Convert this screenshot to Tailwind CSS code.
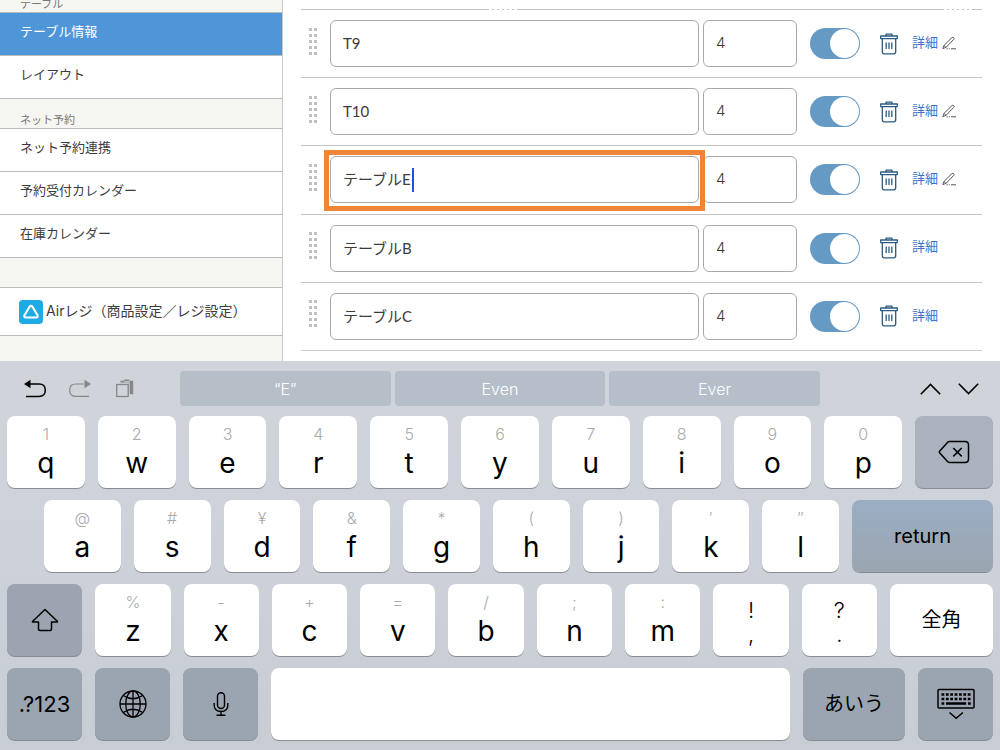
<!DOCTYPE html>
<html lang="ja">
<head>
<meta charset="utf-8">
<meta name="viewport" content="width=device-width, initial-scale=1">
<title>テーブル情報</title>
<script src="https://cdn.jsdelivr.net/npm/@tailwindcss/browser@4"></script>
</head>
<body class="flex min-h-screen flex-col bg-white font-['Inter','Noto_Sans_CJK_JP',sans-serif] text-[#3c3c3c]">

<svg class="hidden" aria-hidden="true">
  <symbol id="grip" viewBox="0 0 9 28">
    <g fill="#bfbfbf">
      <path d="M0 0h3v3H0zM5 0h3v3H5zM0 6h3v3H0zM5 6h3v3H5zM0 12h3v3H0zM5 12h3v3H5zM0 18h3v3H0zM5 18h3v3H5zM0 24h3v3H0zM5 24h3v3H5z"/>
    </g>
  </symbol>
  <symbol id="trash" viewBox="0 0 18 22">
    <g fill="none" stroke="#2b5a83" stroke-width="1.3" stroke-linejoin="round">
      <path d="M6 3V1.2h6V3"/><rect x=".7" y="3" width="16.6" height="2.6"/>
      <path d="M2.3 5.6v13.2q0 2 2 2h9.4q2 0 2-2V5.6"/><path d="M6.2 9.5v6.5M9 9.5v6.5M11.8 9.5v6.5"/>
    </g>
  </symbol>
  <symbol id="pencil" viewBox="0 0 14 14">
    <g fill="none" stroke="#555" stroke-width="1" stroke-linejoin="round">
      <path d="M.8 12.6 2 9.4 9.8 1.700q1-.9 1.900-.1t0 1.800L4 11.4zM2 9.4l2 2"/><path d="M4.500 12.800h1.200M6.800 12.800h1M9 12.800h5"/>
    </g>
  </symbol>
</svg>

<div class="flex">
  <nav class="flex w-[283px] shrink-0 flex-col border-r border-[#c8c8c8] bg-[#f5f5f1] text-[13px]">
    <h2 class="flex h-[13px] items-end border-b border-[#bbb] pl-5 text-[11px] leading-4 text-[#777]">テーブル</h2>
    <a href="#" aria-current="page" class="flex h-[43px] items-center border-b border-[#bbb] bg-[#4f96d8] pb-1 pl-5 text-white">テーブル情報</a>
    <a href="#" class="flex h-[43px] items-center border-b border-[#bbb] bg-white pb-1 pl-5">レイアウト</a>
    <h2 class="flex h-[30px] items-end border-b border-[#bbb] pl-5 text-[11px] leading-4 text-[#777]">ネット予約</h2>
    <a href="#" class="flex h-[43px] items-center border-b border-[#bbb] bg-white pb-1 pl-5">ネット予約連携</a>
    <a href="#" class="flex h-[43px] items-center border-b border-[#bbb] bg-white pb-1 pl-5">予約受付カレンダー</a>
    <a href="#" class="flex h-[43px] items-center border-b border-[#bbb] bg-white pb-1 pl-5">在庫カレンダー</a>
    <a href="#" class="mt-[29px] flex h-[49px] items-center gap-[3px] border-y border-[#bbb] bg-white pl-[19px] text-sm">
      <svg class="size-6" viewBox="0 0 24 24" aria-hidden="true"><rect width="24" height="24" rx="4" fill="#1eabe4"/><path d="M10.6 6.7q1.4-2 2.8 0l5 8.3q1.2 2.5-1.5 2.5H7.1q-2.700 0-1.500-2.500z" fill="none" stroke="#fff" stroke-width="2.100" stroke-linejoin="round"/></svg>
      <span class="pb-0.5">Airレジ（商品設定／レジ設定）</span>
    </a>
  </nav>

  <main class="relative min-w-0 flex-1 px-[18px] pt-[9px] pb-2.5">
    <div class="absolute top-[9px] left-[206px] w-7 border-b border-dashed border-white"></div>
    <div class="absolute top-[9px] right-7 w-7 border-b border-dashed border-white"></div>
    <ul id="rows" class="grid h-[342px] grid-rows-5 border-b border-[#ccc]"></ul>
  </main>
</div>

<section aria-label="キーボード" class="flex flex-1 flex-col gap-3 bg-linear-to-b from-[#d0d3da] via-[#cdd2da] to-[#c8cdd4] px-[7px] pt-2.5 pb-2 text-black">
  <div class="-mb-0.5 flex h-[35px] items-center">
    <div class="flex w-[173px] shrink-0 items-center gap-[19px] pl-[15px]">
      <button aria-label="元に戻す"><svg class="h-6 w-[26px]" viewBox="0 0 26 24"><path d="M7 7h10q6.300 0 6.300 6.200T17 19.400H4" fill="none" stroke="#000" stroke-width="1.500"/><path d="M2 7 8.500 2.800v8.400z"/></svg></button>
      <button aria-label="やり直す"><svg class="h-6 w-[26px]" viewBox="0 0 26 24"><path d="M17 7h-8q-6.300 0-6.300 6.200T9 19.400h13" fill="none" stroke="#858789" stroke-width="1.200"/><path d="M24 7l-6.500-4.200v8.400z" fill="#858789"/></svg></button>
      <button aria-label="ペースト"><svg class="h-6 w-[26px]" viewBox="0 0 26 24"><path d="M8.500 5.500V3.800h3.200q.2-1.300 2-1.300h2q1.800 0 2 1.300h3.500v13.400h-3.500V5.500z" fill="#858789"/><path d="M12 4.600h6" stroke="#d0d3da" stroke-width=".8"/><rect x="4.700" y="7.500" width="11.500" height="12" fill="#d0d3da" stroke="#858789" stroke-width="1.300"/></svg></button>
    </div>
    <div class="grid h-full flex-1 grid-cols-3 gap-1 text-base font-light text-white">
      <button class="rounded bg-[#b6bec8]">“E”</button>
      <button class="rounded bg-[#b6bec9]">Even</button>
      <button class="rounded bg-[#b5bec9]">Ever</button>
    </div>
    <div class="flex w-[173px] shrink-0 items-center justify-end gap-[17px] pr-3.5">
      <button aria-label="前へ"><svg class="h-3 w-[21px]" viewBox="0 0 21 12"><path d="M.8 11.200 10.500 1.500l9.700 9.700" fill="none" stroke="#000" stroke-width="1.600"/></svg></button>
      <button aria-label="次へ"><svg class="h-3 w-[21px]" viewBox="0 0 21 12"><path d="M.8.800l9.700 9.700L20.200.800" fill="none" stroke="#000" stroke-width="1.600"/></svg></button>
    </div>
  </div>

  <div class="flex gap-[13px]" data-keys="1q 2w 3e 4r 5t 6y 7u 8i 9o 0p">
    <button aria-label="削除" class="flex h-[72px] flex-1 items-center justify-center rounded-lg bg-[#a9b2bd] shadow-[0_1px_0_#898d92]"><svg class="h-6 w-8" viewBox="0 0 32 24"><path d="M11.500 1.500h15.500q3.500 0 3.500 3.500v14q0 3.500-3.500 3.500H11.500q-1.200 0-2-.9L1.800 13q-.9-1 0-2L9.500 2.400q.8-.9 2-.9zM15.300 8l8.400 8.400M23.700 8l-8.400 8.400" fill="none" stroke="#000" stroke-width="1.500"/></svg></button>
  </div>
  <div class="flex gap-[13px] pl-[37px]" data-keys="@a #s ¥d &amp;f *g (h )j ′k ″l">
    <button class="h-[72px] w-[141px] rounded-lg bg-linear-to-b from-[#9aadc3] to-[#9ba5b1] text-xl shadow-[0_1px_0_#858a91]">return</button>
  </div>
  <div class="flex gap-[13px]" data-keys="%z -x +c =v /b ;n :m">
    <button aria-label="シフト" data-first class="flex h-[72px] flex-1 items-center justify-center rounded-lg bg-[#9ca4b1] shadow-[0_1px_0_#858a91]"><svg class="h-6 w-7" viewBox="0 0 28 24"><path d="M14 1.500 26.300 13.200q.7.900-.4.900H20.500v7q0 1.500-1.500 1.500H9q-1.500 0-1.500-1.500v-7H2.100q-1.100 0-.4-.9z" fill="none" stroke="#000" stroke-width="1.500" stroke-linejoin="round"/></svg></button>
    <button class="flex h-[72px] flex-1 flex-col items-center justify-center rounded-lg bg-white pt-1 text-[22px] leading-6 font-light shadow-[0_1px_0_#898d92]"><span>!</span><span>,</span></button>
    <button class="flex h-[72px] flex-1 flex-col items-center justify-center rounded-lg bg-white pt-1 text-[22px] leading-6 font-light shadow-[0_1px_0_#898d92]"><span>?</span><span>.</span></button>
    <button class="h-[72px] w-[103px] rounded-lg bg-white text-xl shadow-[0_1px_0_#898d92]">全角</button>
  </div>
  <div class="flex gap-[13px]">
    <button class="h-[72px] w-[75px] rounded-lg bg-[#9ba5b1] text-[22px] shadow-[0_1px_0_#858a91]">.?123</button>
    <button aria-label="言語" class="flex h-[72px] w-[75px] items-center justify-center rounded-lg bg-[#9ba5b1] shadow-[0_1px_0_#858a91]"><svg class="size-7" viewBox="0 0 28 28"><g fill="none" stroke="#000" stroke-width="1.300"><circle cx="14" cy="14" r="13"/><ellipse cx="14" cy="14" rx="7.300" ry="13"/><path d="M14 1v26M1 14h26M4.300 5.500Q14 12 23.700 5.500M4.300 22.500Q14 16 23.700 22.500"/></g></svg></button>
    <button aria-label="音声入力" class="flex h-[72px] w-[75px] items-center justify-center rounded-lg bg-[#9ba5b1] shadow-[0_1px_0_#858a91]"><svg class="h-6 w-4" viewBox="0 0 16 24"><g fill="none" stroke="#000" stroke-width="1.400"><rect x="4.500" y=".8" width="7" height="15.700" rx="3.500"/><path d="M1.200 11v2q0 6.500 6.800 6.500T14.800 13v-2M8 19.500V23M3.500 23.200h9"/></g></svg></button>
    <button aria-label="空白" class="h-[72px] flex-1 rounded-lg bg-white shadow-[0_1px_0_#898d92]"></button>
    <button class="h-[72px] w-[102px] rounded-lg bg-[#9ba5b1] text-xl shadow-[0_1px_0_#858a91]">あいう</button>
    <button aria-label="キーボードを閉じる" class="flex h-[72px] w-[75px] items-center justify-center rounded-lg bg-[#9ba5b1] shadow-[0_1px_0_#858a91]"><svg class="h-8 w-[38px]" viewBox="0 0 38 32"><rect x="1" y="1.500" width="36" height="18.500" rx="1" fill="none" stroke="#000" stroke-width="1.500"/><path d="M4.500 6.500h29M4.500 11h29" stroke="#000" stroke-width="2.600" stroke-dasharray="2.800 1.570"/><path d="M4.500 15.500h2.800M9 15.500h20.200M31 15.500h2.800" stroke="#000" stroke-width="2.600"/><path d="M12.500 24.500l6.700 5.800 6.700-5.800" fill="none" stroke="#000" stroke-width="1.500"/></svg></button>
  </div>
</section>

<script>
const tables = [
  { name: 'T9', edit: true }, { name: 'T10', edit: true }, { name: 'テーブルE', edit: true, active: true },
  { name: 'テーブルB' }, { name: 'テーブルC' }
];
document.getElementById('rows').innerHTML = tables.map(t => `
  <li class="flex items-center border-t border-[#c4c4c4] pl-2">
    <svg class="mr-3 mb-1 h-7 w-[9px]" aria-hidden="true"><use href="#grip"/></svg>
    <div class="relative flex min-w-0 flex-1">
      <input aria-label="テーブル名" value="${t.name}" class="h-[47px] w-full rounded-md border border-[#a9a9a9] bg-white px-3 pb-0.5 font-['Lato','Noto_Sans_CJK_JP',sans-serif] text-[15px] outline-none">
      ${t.active ? `<span class="absolute top-3 left-[82px] h-6 w-0.5 bg-[#2450e0]"></span>
      <span class="pointer-events-none absolute -inset-x-1.5 -top-1.5 -bottom-2 z-10 border-5 border-[#f08536]"></span>` : ''}
    </div>
    <input aria-label="人数" value="4" class="ml-1 h-[47px] w-[94px] rounded-md border border-[#a9a9a9] bg-white px-3 pb-0.5 text-[15px] font-light outline-none">
    <label class="ml-[13px] flex h-[31px] w-[50px] justify-end rounded-full bg-[#659ac5] p-px">
      <input type="checkbox" checked aria-label="有効" class="peer sr-only"><span class="size-[29px] rounded-full bg-white"></span>
    </label>
    <button aria-label="削除" class="ml-5"><svg class="h-[22px] w-[18px]"><use href="#trash"/></svg></button>
    <div class="ml-3.5 flex w-[70px] items-center gap-1 pb-0.5">
      <a href="#" class="text-[13px] text-[#3a72d0]">詳細</a>${t.edit ? '<svg class="size-3.5" aria-hidden="true"><use href="#pencil"/></svg>' : ''}
    </div>
  </li>`).join('');

for (const row of document.querySelectorAll('[data-keys]')) {
  const html = row.dataset.keys.split(' ').map(k => `
    <button class="flex h-[72px] flex-1 flex-col items-center rounded-lg bg-white pt-2 shadow-[0_1px_0_#898d92]">
      <span class="text-base leading-5 font-light text-[#aaa]">${k[0].replace('&', '&amp;')}</span><span class="text-[28px] leading-[38px]">${k[1]}</span>
    </button>`).join('');
  const first = row.querySelector('[data-first]');
  if (first) first.insertAdjacentHTML('afterend', html);
  else row.insertAdjacentHTML('afterbegin', html);
}
</script>
</body>
</html>
